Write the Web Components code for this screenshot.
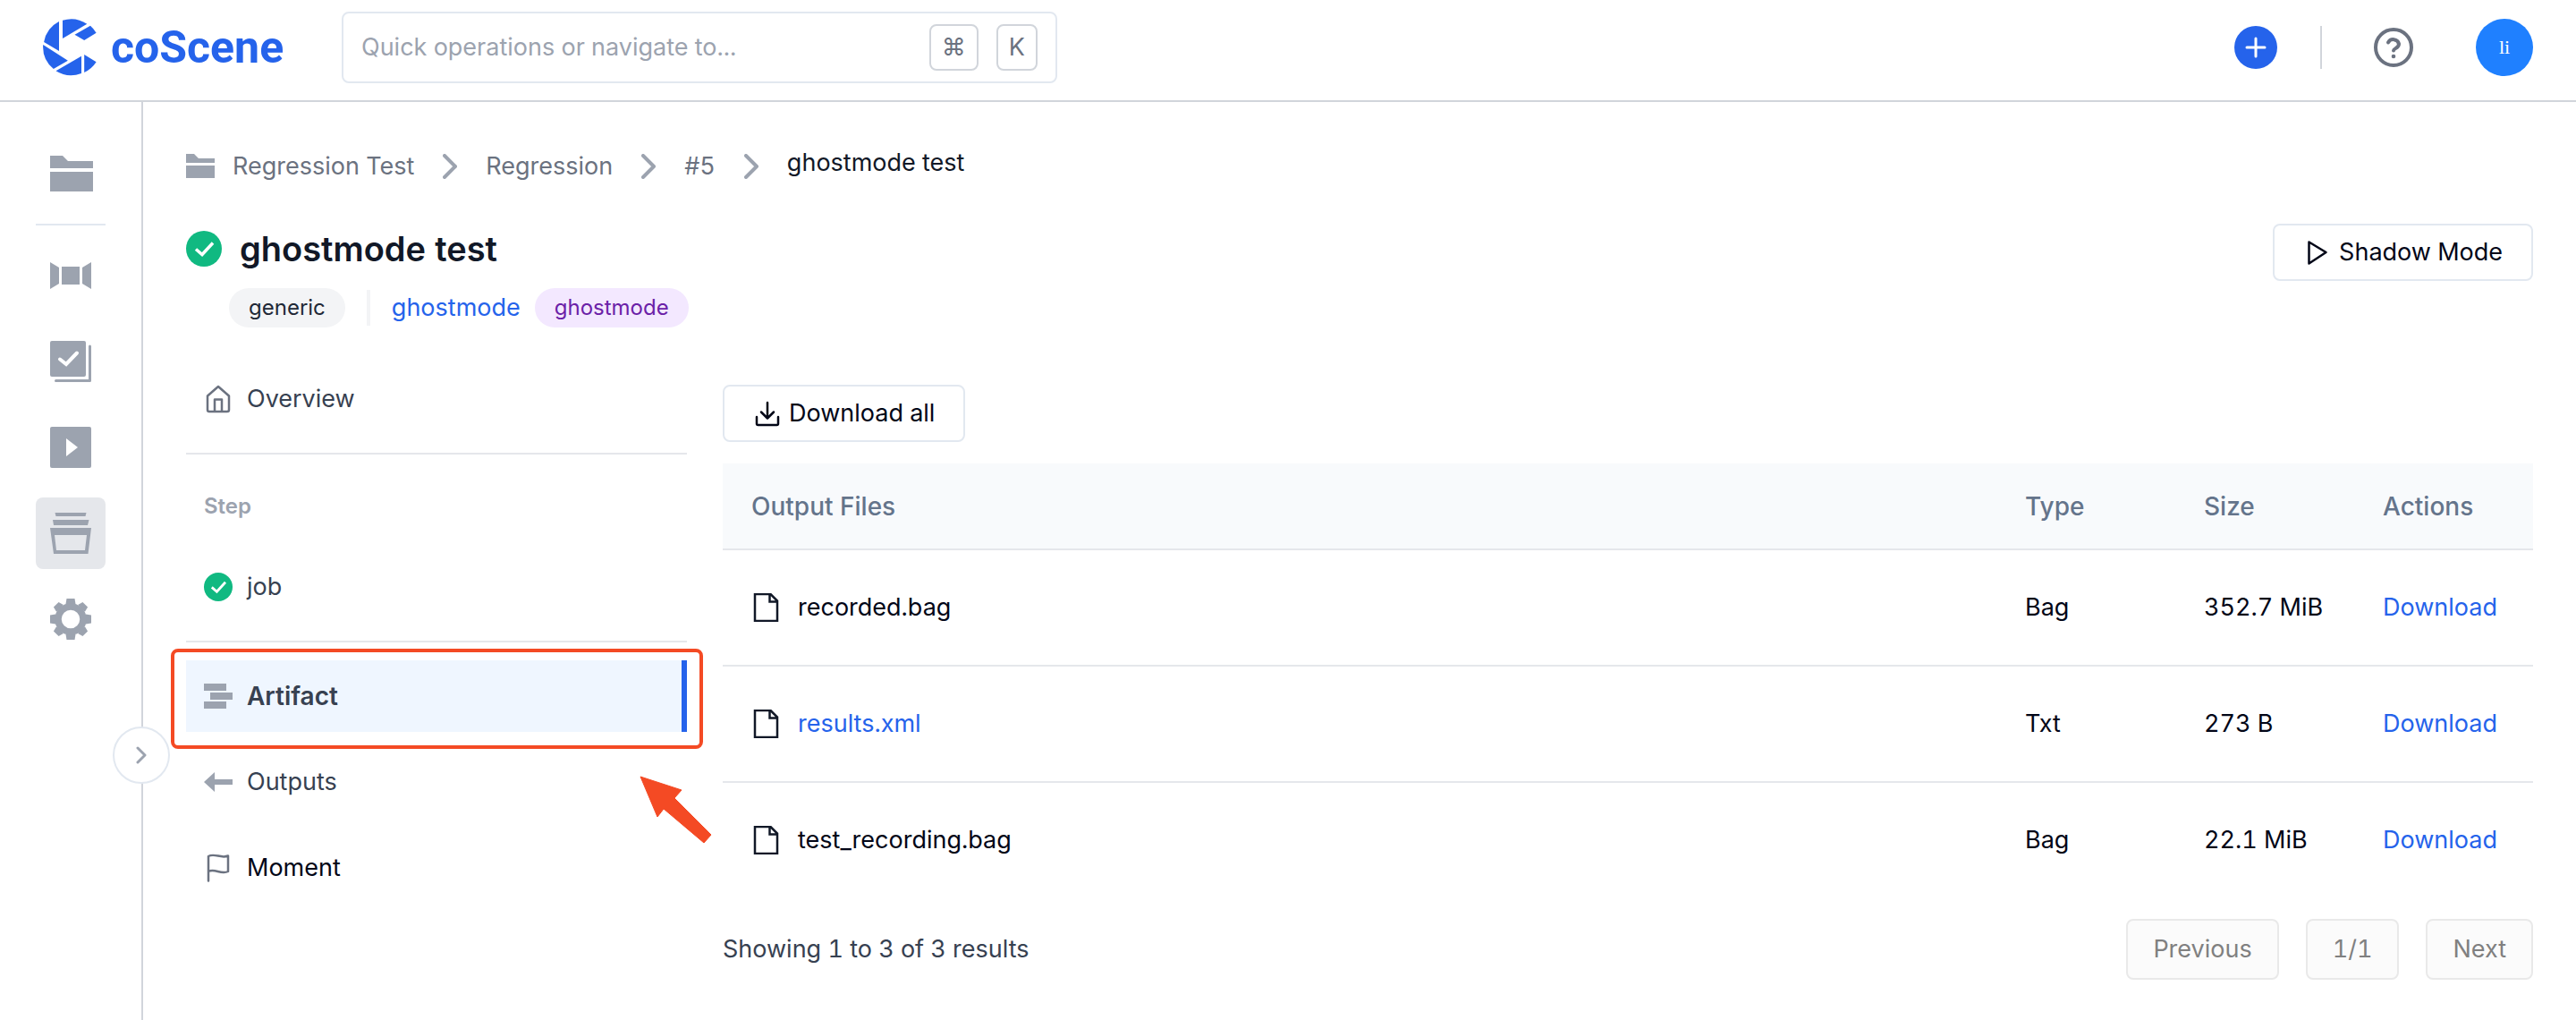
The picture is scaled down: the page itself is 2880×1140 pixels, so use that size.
<!DOCTYPE html>
<html lang="en">
<head>
<meta charset="utf-8">
<title>coScene</title>
<style>
  body { margin: 0; background: #fff; color: #020617; font: 400 27px/40px Inter, "Liberation Sans", sans-serif; font-variant-numeric: tabular-nums; }
</style>
</head>
<body>
<cs-app></cs-app>
<script>
const BASE = `<style>
  *, *::before, *::after { box-sizing: border-box; }
  :host { display: block; box-sizing: border-box; }
  a { color: inherit; text-decoration: none; }
  button, input { font: inherit; color: inherit; margin: 0; }
  button { cursor: pointer; }
</style>`;

function define(name, html, setup) {
  const tpl = document.createElement('template');
  tpl.innerHTML = BASE + html;
  customElements.define(name, class extends HTMLElement {
    constructor() {
      super();
      this.attachShadow({ mode: 'open' }).append(tpl.content.cloneNode(true));
    }
    connectedCallback() { if (setup) setup(this, this.shadowRoot); }
  });
}

// Icon set: [viewBox width, viewBox height, markup]
const ICONS = {
  mark: [60, 64, '<g fill="currentColor"><path d="M22 1.7V22L49.3 5.7A32 32 0 0 0 22 1.7Z"/><path d="M53 7.7A32 32 0 0 1 59.6 15.7L46.2 24L35.5 17.7Z"/><path d="M18 3V36L1.1 26A32 32 0 0 1 18 3Z"/><path d="M.2 29L27.9 46.7L11.8 56A32 32 0 0 1 .2 29Z"/><path d="M14.5 58.3L43 41.7V61A32 32 0 0 1 14.5 58.3Z"/><path d="M46.2 40L59.6 48.3A32 32 0 0 1 46.2 60Z"/></g>'],
  folder: [48, 40, '<path fill="currentColor" d="M0 0H14L20 6H48V14H0ZM0 18H48V40H0Z"/>'],
  crumb: [32, 28, '<path fill="currentColor" d="M0 0H9L14 5H32V10H0ZM0 13H32V27H0Z"/>'],
  film: [46, 30, '<path fill="currentColor" d="M0 0L10 6V24L0 30ZM46 0L36 6V24L46 30ZM13 5H33V25H13Z"/>'],
  tasks: [46, 46, '<rect width="40" height="40" rx="2" fill="currentColor"/><path d="M11 20.500L18 26L30 13.500" fill="none" stroke="#fff" stroke-width="4" stroke-linecap="round"/><path d="M6.500 44.500H44.500V6" fill="none" stroke="currentColor" stroke-width="3" stroke-linecap="round" stroke-linejoin="round"/>'],
  play: [46, 46, '<rect width="46" height="46" rx="2" fill="currentColor"/><path d="M18 13L31 23L18 33Z" fill="#fff"/>'],
  stack: [46, 46, '<path fill="currentColor" fill-rule="evenodd" d="M5.500 0H40.500L39.500 4H6.500ZM3 8H43.500L42 14H4ZM0 17H46L42.500 46H4ZM5 25L7 42H39L41 25Z"/>'],
  gear: [46, 46, '<g fill="currentColor"><path d="M18.500 0H27.500L28.500 6H17.500Z"/><path d="M18.500 46H27.500L28.500 40H17.500Z"/><path d="M0 18.500V27.500L6 28.500V17.500Z"/><path d="M46 18.500V27.500L40 28.500V17.500Z"/><g transform="rotate(45 23 23)"><path d="M19 0H27L28.500 6H17.500Z"/><path d="M19 46H27L28.500 40H17.500Z"/><path d="M0 19V27L6 28.500V17.500Z"/><path d="M46 19V27L40 28.500V17.500Z"/></g></g><circle cx="23" cy="23" r="14" fill="none" stroke="currentColor" stroke-width="7.500"/>'],
  chevron: [16, 28, '<path d="M2 2L14 14L2 26" fill="none" stroke="currentColor" stroke-width="4" stroke-linecap="round" stroke-linejoin="round"/>'],
  small: [12, 20, '<path d="M2 2L10 10L2 18" fill="none" stroke="currentColor" stroke-width="3" stroke-linecap="round" stroke-linejoin="round"/>'],
  plus: [48, 48, '<circle cx="24" cy="24" r="24" fill="#2563eb"/><path d="M24 14V34M14 24H34" stroke="#fff" stroke-width="3" stroke-linecap="round"/>'],
  help: [48, 48, '<g fill="none" stroke="currentColor" stroke-width="4" stroke-linecap="round" stroke-linejoin="round"><circle cx="24" cy="24" r="20"/><path d="M18 18.500A6.500 6.500 0 0 1 30 20C30 25 24 25 24 27.500"/></g><circle cx="24" cy="34" r="2.300" fill="currentColor"/>'],
  check: [40, 40, '<circle cx="20" cy="20" r="20" fill="#10b981"/><path d="M11 20.500L18 26.500L30 13.500" fill="none" stroke="#fff" stroke-width="3.500"/>'],
  triangle: [32, 32, '<path d="M6.500 4.500L25.500 16L6.500 28.500Z" fill="none" stroke="currentColor" stroke-width="2.500" stroke-linejoin="round"/>'],
  download: [32, 32, '<path d="M16 4V21M9 14.500L16 21.500L23 14.500M4 20V27.500Q4 29 5.500 29H26.500Q28 29 28 27.500V20" fill="none" stroke="currentColor" stroke-width="2.500" stroke-linecap="round" stroke-linejoin="round"/>'],
  home: [32, 32, '<path d="M4 12.500L16 2L28 12.500V28Q28 30 26 30H6Q4 30 4 28ZM12 30V16.500H20V30" fill="none" stroke="currentColor" stroke-width="2.500" stroke-linejoin="round"/>'],
  bars: [32, 28, '<path fill="currentColor" d="M0 0H25V8H0ZM7 10H32V18H7ZM0 20H25V28H0Z"/>'],
  back: [32, 22, '<path fill="currentColor" d="M0 11L12 0V8H32V14H12V22Z"/>'],
  flag: [32, 32, '<path d="M5 30.500V3C12-1 19 6 27 2.500V20C19 24 12 16 5 20" fill="none" stroke="currentColor" stroke-width="2.500" stroke-linecap="round" stroke-linejoin="round"/>'],
  file: [32, 32, '<path d="M4 1H21.500L29 8.500V31H4ZM20.500 1V9.500H29" fill="none" stroke="currentColor" stroke-width="2.500"/>'],
  pointer: [82, 76, '<path fill="#f44a24" stroke="#f44a24" stroke-linejoin="round" d="M1 1L47 16L39 25L80 66L72 75L27 37L20 46Z"/>'],
};

define('cs-icon', `<style>:host { display: inline-block; flex: none; } svg { display: block; }</style>`, (host, root) => {
  const [w, h, body] = ICONS[host.getAttribute('name')];
  const width = +(host.getAttribute('width') || w);
  root.querySelector('svg')?.remove();
  root.append(document.createRange().createContextualFragment(
    `<svg xmlns="http://www.w3.org/2000/svg" width="${width}" height="${Math.round(width * h / w)}" viewBox="0 0 ${w} ${h}" aria-hidden="true">${body}</svg>`));
});

define('cs-logo', `<style>
  a { display: flex; align-items: center; gap: 16px; color: #2563eb; }
  span { font: 700 50px/64px Roboto, "Liberation Sans", sans-serif; }
</style><a href="#"><cs-icon name="mark"></cs-icon><span>coScene</span></a>`);

define('cs-search', `<style>
  label { display: flex; align-items: center; gap: 20px; height: 80px; padding: 0 20px; border: 2px solid #e2e8f0; border-radius: 8px; }
  input { flex: 1; min-width: 0; padding: 0; border: 0; outline: 0; background: none; }
  input::placeholder { color: #9ca3af; opacity: 1; }
  kbd { height: 52px; padding: 0 12px; border: 2px solid #d1d5db; border-radius: 8px; color: #6b7280; font: inherit; line-height: 48px; }
</style><label><input type="text" aria-label="Quick operations" placeholder="Quick operations or navigate to..."><kbd>⌘</kbd><kbd>K</kbd></label>`);

define('cs-header', `<style>
  header { display: flex; align-items: center; padding: 13px 48px 19px; border-bottom: 2px solid #d1d5db; }
  cs-logo { flex: 0 0 334px; }
  cs-search { flex: 0 1 800px; }
  .tools { display: flex; align-items: center; margin-left: auto; }
  button { display: grid; place-items: center; padding: 0; border: 0; background: none; color: #6b7280; }
  .rule { width: 2px; height: 48px; margin: 0 56px 0 48px; background: #d1d5db; }
  .avatar { width: 64px; height: 64px; margin-left: 68px; border-radius: 50%; background: #1f80ff; color: #fff; font: 22px/32px "Liberation Serif", serif; }
</style>
<header>
  <cs-logo></cs-logo><cs-search></cs-search>
  <div class="tools">
    <button aria-label="Create"><cs-icon name="plus"></cs-icon></button>
    <div class="rule"></div>
    <button aria-label="Help"><cs-icon name="help"></cs-icon></button>
    <button class="avatar">li</button>
  </div>
</header>`);

define('cs-rail', `<style>
  :host { position: relative; flex: 0 0 160px; border-right: 2px solid #d1d5db; color: #9ca3af; }
  nav { display: flex; flex-direction: column; gap: 16px; padding: 40px; }
  a { display: grid; place-items: center start; height: 80px; padding-left: 16px; border-radius: 8px; }
  a.on { background: #e5e7eb; }
  hr { width: 100%; height: 2px; margin: 0; border: 0; background: #e2e8f0; }
  button { position: absolute; top: 698px; right: -32px; display: grid; place-items: center; width: 64px; height: 64px; padding: 0; border: 2px solid #e2e8f0; border-radius: 50%; background: #fff; }
</style>
<nav>
  <a href="#" aria-label="Projects"><cs-icon name="folder"></cs-icon></a>
  <hr>
  <a href="#" aria-label="Records"><cs-icon name="film"></cs-icon></a>
  <a href="#" aria-label="Tasks"><cs-icon name="tasks"></cs-icon></a>
  <a href="#" aria-label="Actions"><cs-icon name="play"></cs-icon></a>
  <a href="#" aria-label="Batch tests" class="on"><cs-icon name="stack"></cs-icon></a>
  <a href="#" aria-label="Settings"><cs-icon name="gear"></cs-icon></a>
</nav>
<button aria-label="Expand"><cs-icon name="small"></cs-icon></button>`);

define('cs-crumbs', `<style>
  nav { display: flex; align-items: center; gap: 32px; color: #6b7280; }
  nav > cs-icon, a cs-icon { color: #9ca3af; }
  a { display: flex; align-items: center; gap: 20px; }
  .here { color: #111827; padding-bottom: 8px; }
</style>
<nav aria-label="Breadcrumb">
  <a href="#"><cs-icon name="crumb"></cs-icon>Regression Test</a><cs-icon name="chevron"></cs-icon>
  <a href="#">Regression</a><cs-icon name="chevron"></cs-icon>
  <a href="#">#5</a><cs-icon name="chevron"></cs-icon>
  <span class="here">ghostmode test</span>
</nav>`);

define('cs-button', `<style>
  :host { display: inline-block; }
  button { display: flex; align-items: center; gap: 8px; height: 64px; padding: 0 32px; border: 2px solid #e2e8f0; border-radius: 8px; background: #fff; }
</style><button><slot name="icon"></slot><slot></slot></button>`);

define('cs-tag', `<style>
  :host { padding: 0 22px; border-radius: 22px; background: #f3f4f6; color: #1f2937; font-size: 24px; line-height: 44px; }
  :host([tone="purple"]) { background: #f3e8ff; color: #6b21a8; }
</style><slot></slot>`);

define('cs-title', `<style>
  :host { display: flex; align-items: flex-start; justify-content: space-between; }
  .name { display: flex; align-items: center; gap: 20px; }
  h1 { margin: 0; color: #111827; font-size: 38px; font-weight: 600; line-height: 56px; }
  .tags { display: flex; align-items: center; padding: 16px 0 0 48px; }
  .rule { width: 4px; height: 40px; margin: 0 24px; background: #f3f4f6; }
  a { margin-right: 16px; color: #2563eb; }
</style>
<div>
  <div class="name"><cs-icon name="check"></cs-icon><h1>ghostmode test</h1></div>
  <div class="tags"><cs-tag>generic</cs-tag><div class="rule"></div><a href="#">ghostmode</a><cs-tag tone="purple">ghostmode</cs-tag></div>
</div>
<cs-button><cs-icon slot="icon" name="triangle"></cs-icon>Shadow Mode</cs-button>`);

define('cs-step', `<style>
  :host { position: relative; color: #374151; }
  a { display: flex; align-items: center; height: 80px; padding: 0 20px; }
  .icon { display: grid; place-items: center; width: 32px; margin-right: 16px; color: #9ca3af; }
  :host([line]) .icon { color: #6b7280; }
  :host([dark]) { color: #020617; }
  :host([on]) a { background: #eff6ff; border-right: 6px solid #2563eb; font-size: 28px; font-weight: 600; }
</style><a href="#"><span class="icon"><slot name="icon"></slot></span><slot></slot></a><slot name="over"></slot>`);

define('cs-steps', `<style>
  :host { position: relative; flex: 0 0 560px; }
  nav { display: flex; flex-direction: column; }
  hr { width: 100%; height: 2px; margin: 20px 0; border: 0; background: #e5e7eb; }
  h2 { margin: 0; padding: 18px 20px 30px; color: #9ca3af; font-size: 24px; font-weight: 600; line-height: 40px; }
  .gap { height: 16px; }
  .frame { position: absolute; inset: -13px -18px -19px -17px; border: 4px solid #f44a24; border-radius: 8px; pointer-events: none; }
  .pointer { position: absolute; left: 507px; top: 461px; }
</style>
<nav>
  <cs-step line><cs-icon slot="icon" name="home"></cs-icon>Overview</cs-step>
  <hr>
  <h2>Step</h2>
  <cs-step><cs-icon slot="icon" name="check" width="32"></cs-icon>job</cs-step>
  <hr>
  <cs-step on><cs-icon slot="icon" name="bars"></cs-icon>Artifact<div slot="over" class="frame"></div></cs-step>
  <div class="gap"></div>
  <cs-step><cs-icon slot="icon" name="back"></cs-icon>Outputs</cs-step>
  <div class="gap"></div>
  <cs-step line dark><cs-icon slot="icon" name="flag"></cs-icon>Moment</cs-step>
</nav>
<cs-icon class="pointer" name="pointer"></cs-icon>`);

const FILES = [
  ['recorded.bag', 'Bag', '352.7 MiB', false],
  ['results.xml', 'Txt', '273 B', true],
  ['test_recording.bag', 'Bag', '22.1 MiB', false],
];

define('cs-files', `<style>
  table { width: 100%; border-collapse: separate; border-spacing: 0; table-layout: fixed; }
  th, td { padding: 0 0 0 32px; text-align: left; }
  th { height: 97px; border-bottom: 2px solid #e5e7eb; background: #f8fafc; color: #64748b; font-size: 28px; font-weight: 500; }
  th:not(:first-child) { width: 200px; }
  td { height: 130px; border-bottom: 2px solid #e5e7eb; }
  tr:last-child td { height: 128px; border: 0; }
  .file { display: flex; align-items: center; gap: 20px; }
  .file cs-icon { color: #111827; }
  a { color: #2563eb; }
</style>
<table>
  <thead><tr><th>Output Files</th><th>Type</th><th>Size</th><th>Actions</th></tr></thead>
  <tbody></tbody>
</table>`, (host, root) => {
  root.querySelector('tbody').innerHTML = FILES.map(([name, type, size, link]) =>
    `<tr><td><span class="file"><cs-icon name="file"></cs-icon>${link ? `<a href="#">${name}</a>` : name}</span></td><td>${type}</td><td>${size}</td><td><a href="#">Download</a></td></tr>`).join('');
});

define('cs-pager', `<style>
  :host { display: flex; align-items: center; justify-content: space-between; color: #374151; }
  div { display: flex; gap: 30px; }
  button { height: 68px; padding: 0 28px; border: 2px solid #e9e9e9; border-radius: 8px; background: #fbfbfb; color: #808080; cursor: default; }
</style>
<span>Showing 1 to 3 of 3 results</span>
<div><button disabled>Previous</button><button disabled>1/1</button><button disabled>Next</button></div>`);

define('cs-app', `<style>
  :host { display: flex; flex-direction: column; min-height: 100vh; }
  .body { display: flex; flex: 1; }
  main { flex: 1; min-width: 0; padding: 48px; }
  cs-crumbs { margin-bottom: 40px; }
  .panes { display: flex; gap: 40px; margin-top: 40px; }
  .output { flex: 1; min-width: 0; padding-top: 24px; }
  cs-files { margin: 24px 0; }
</style>
<cs-header></cs-header>
<div class="body">
  <cs-rail></cs-rail>
  <main>
    <cs-crumbs></cs-crumbs>
    <cs-title></cs-title>
    <div class="panes">
      <cs-steps></cs-steps>
      <section class="output">
        <cs-button><cs-icon slot="icon" name="download"></cs-icon>Download all</cs-button>
        <cs-files></cs-files>
        <cs-pager></cs-pager>
      </section>
    </div>
  </main>
</div>`);
</script>
</body>
</html>
